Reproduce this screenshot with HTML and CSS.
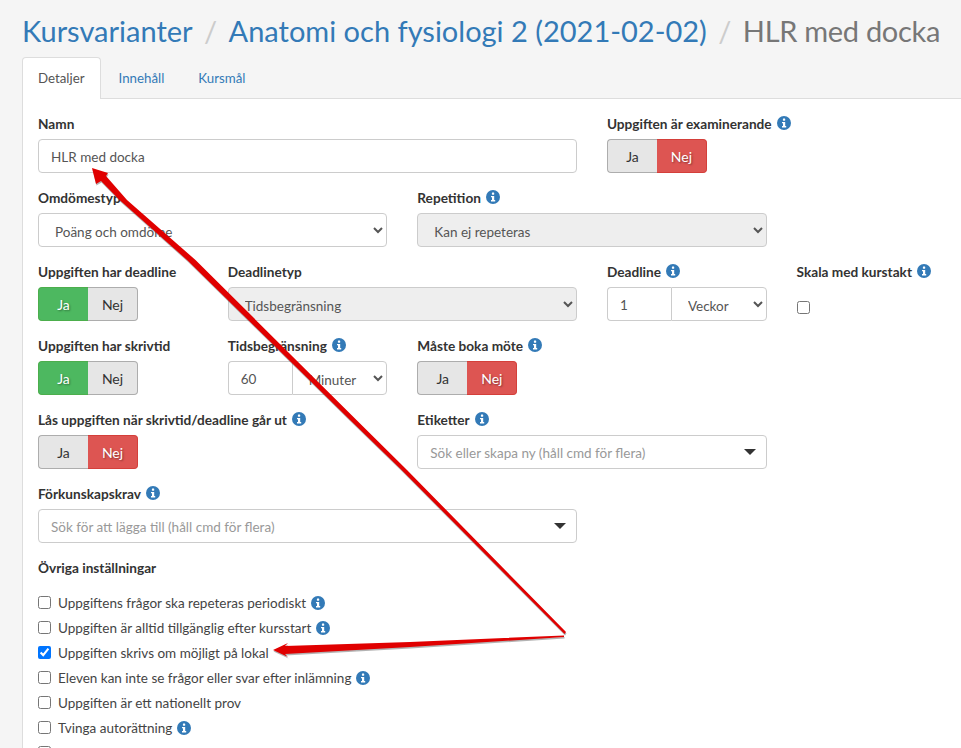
FILE: index.html
```html
<!DOCTYPE html>
<html lang="sv">
<head>
<meta charset="utf-8">
<title>HLR med docka</title>
<link rel="stylesheet" href="styles.css">
</head>
<body>
<svg width="0" height="0" class="defs">
  <symbol id="info" viewBox="0 0 14 14">
    <circle cx="7" cy="7" r="7" fill="#337ab7"/>
    <rect x="5.9" y="2.6" width="2.3" height="2.1" rx=".4" fill="#fff"/>
    <path d="M5 5.9h3.2v4.2h1v1.4H5v-1.4h1V7.3H5z" fill="#fff"/>
  </symbol>
</svg>
<main class="page">
  <h1 class="crumbs">
    <a class="crumb-link">Kursvarianter</a><span class="sep">/</span>
    <a class="crumb-link">Anatomi och fysiologi 2 (2021-02-02)</a><span class="sep">/</span>
    <span class="crumb-now">HLR med docka</span>
  </h1>
  <nav class="tabs">
    <a class="tab active">Detaljer</a>
    <a class="tab">Innehåll</a>
    <a class="tab">Kursmål</a>
  </nav>
  <form class="panel">
    <div class="grid">
      <div class="field s3">
        <label class="lbl">Namn</label>
        <input class="ctl" type="text" value="HLR med docka">
      </div>
      <div class="field">
        <label class="lbl">Uppgiften är examinerande <svg class="i"><use href="#info"/></svg></label>
        <div class="toggle"><span class="tg">Ja</span><span class="tg red">Nej</span></div>
      </div>

      <div class="field s2 newrow">
        <label class="lbl">Omdömestyp</label>
        <select class="ctl sel"><option>Poäng och omdöme</option></select>
      </div>
      <div class="field s2">
        <label class="lbl">Repetition <svg class="i"><use href="#info"/></svg></label>
        <select class="ctl sel" disabled><option>Kan ej repeteras</option></select>
      </div>

      <div class="field newrow">
        <label class="lbl">Uppgiften har deadline</label>
        <div class="toggle"><span class="tg green">Ja</span><span class="tg">Nej</span></div>
      </div>
      <div class="field s2">
        <label class="lbl">Deadlinetyp</label>
        <select class="ctl sel" disabled><option>Tidsbegränsning</option></select>
      </div>
      <div class="field">
        <label class="lbl">Deadline <svg class="i"><use href="#info"/></svg></label>
        <div class="group"><input class="num" type="text" value="1"><select class="unit"><option>Veckor</option></select></div>
      </div>
      <div class="field">
        <label class="lbl">Skala med kurstakt <svg class="i"><use href="#info"/></svg></label>
        <input class="scale" type="checkbox">
      </div>

      <div class="field newrow">
        <label class="lbl">Uppgiften har skrivtid</label>
        <div class="toggle"><span class="tg green">Ja</span><span class="tg">Nej</span></div>
      </div>
      <div class="field">
        <label class="lbl">Tidsbegränsning <svg class="i"><use href="#info"/></svg></label>
        <div class="group"><input class="num" type="text" value="60"><select class="unit"><option>Minuter</option></select></div>
      </div>
      <div class="field">
        <label class="lbl">Måste boka möte <svg class="i"><use href="#info"/></svg></label>
        <div class="toggle"><span class="tg">Ja</span><span class="tg red">Nej</span></div>
      </div>

      <div class="field s2 newrow">
        <label class="lbl">Lås uppgiften när skrivtid/deadline går ut <svg class="i"><use href="#info"/></svg></label>
        <div class="toggle"><span class="tg">Ja</span><span class="tg red">Nej</span></div>
      </div>
      <div class="field s2">
        <label class="lbl">Etiketter <svg class="i"><use href="#info"/></svg></label>
        <div class="ctl multi"><span>Sök eller skapa ny (håll cmd för flera)</span><i class="caret"></i></div>
      </div>

      <div class="field s3 newrow">
        <label class="lbl">Förkunskapskrav <svg class="i"><use href="#info"/></svg></label>
        <div class="ctl multi"><span>Sök för att lägga till (håll cmd för flera)</span><i class="caret"></i></div>
      </div>
    </div>

    <div class="lbl other">Övriga inställningar</div>
    <ul class="checks">
      <li><input type="checkbox"><span>Uppgiftens frågor ska repeteras periodiskt</span><svg class="i"><use href="#info"/></svg></li>
      <li><input type="checkbox"><span>Uppgiften är alltid tillgänglig efter kursstart</span><svg class="i"><use href="#info"/></svg></li>
      <li><input type="checkbox" checked><span>Uppgiften skrivs om möjligt på lokal</span></li>
      <li><input type="checkbox"><span>Eleven kan inte se frågor eller svar efter inlämning</span><svg class="i"><use href="#info"/></svg></li>
      <li><input type="checkbox"><span>Uppgiften är ett nationellt prov</span></li>
      <li><input type="checkbox"><span>Tvinga autorättning</span><svg class="i"><use href="#info"/></svg></li>
      <li><input type="checkbox"><span>Uppgiften kan inte rättas av lärare</span></li>
    </ul>
  </form>
</main>
<svg class="arrows" width="961" height="748" viewBox="0 0 961 748">
  <g fill="#444" opacity=".4" transform="translate(.5 1.5)">
    <polygon points="92,168 108,173 106,176 127,200 195.5,260 356.5,420 407,470 566,632 564.5,634 401.5,470 350,420 187,260 119.5,200 101,181 96,184"/>
    <polygon points="273,650 288,643 285,646 410,642 564,635.5 564,637 410,647 285,654 288,657"/>
  </g>
  <g fill="#e00000">
    <polygon points="92,168 108,173 106,176 127,200 195.5,260 356.5,420 407,470 566,632 564.5,634 401.5,470 350,420 187,260 119.5,200 101,181 96,184"/>
    <polygon points="273,650 288,643 285,646 410,642 564,635.5 564,637 410,647 285,654 288,657"/>
  </g>
</svg>
</body>
</html>
```
FILE: styles.css
```css
* { box-sizing: border-box; }
html, body { margin: 0; height: 748px; overflow: hidden; }
body {
  background: #f5f5f5;
  color: #333;
  font-family: "Lato", "Open Sans", sans-serif;
  font-size: 14px;
  position: relative;
}
.defs { position: absolute; }
.page { padding: 14px 0 0 22px; width: 1400px; }
.crumbs {
  display: flex;
  align-items: center;
  margin: 0 0 9px;
  height: 34px;
  font-size: 29px;
  font-weight: 400;
  line-height: 34px;
}
.crumb-link { color: #337ab7; }
.crumb-now { color: #777; letter-spacing: -.3px; }
.sep { color: #ccc; width: 36px; text-align: center; }
.tabs {
  display: flex;
  height: 42px;
  border-bottom: 1px solid #ddd;
}
.tab {
  padding: 0 15px;
  margin-right: 2px;
  height: 41px;
  line-height: 41px;
  color: #337ab7;
  font-size: 13.3px;
  border: 1px solid transparent;
  border-bottom: 0;
}
.tab.active {
  color: #555;
  background: #fff;
  border-color: #ddd;
  border-radius: 4px 4px 0 0;
  height: 42px;
}
.panel {
  background: #fff;
  border-left: 1px solid #ddd;
  padding: 15px 15px 0;
  height: 700px;
}
.grid {
  display: grid;
  grid-template-columns: repeat(6, 159.65px);
  column-gap: 30px;
  row-gap: 15px;
}
.field { grid-column: auto / span 1; min-width: 0; }
.s2 { grid-column: auto / span 2; }
.s3 { grid-column: auto / span 3; }
.newrow { grid-column-start: 1; }
.lbl {
  display: block;
  height: 20px;
  line-height: 20px;
  margin-bottom: 5px;
  font-weight: 700;
  font-size: 13.65px;
  white-space: nowrap;
  color: #333;
}
.i {
  width: 14px;
  height: 14px;
  margin-left: 2px;
  vertical-align: -1px;
}
.ctl {
  display: block;
  width: 100%;
  height: 34px;
  padding: 7px 12px 5px;
  font: inherit;
  font-size: 13.5px;
  color: #555;
  background-color: #fff;
  border: 1px solid #ccc;
  border-radius: 4px;
  outline: 0;
}
.sel { padding-top: 8px; padding-bottom: 4px; }
.sel[disabled] { background-color: #eee; opacity: 1; color: #555; }
.toggle { display: flex; width: 100px; height: 34px; }
.tg {
  flex: 1;
  display: flex;
  align-items: center;
  justify-content: center;
  font-size: 14px;
  color: #333;
  background: #e6e6e6;
  border: 1px solid #adadad;
}
.tg:first-child { border-radius: 4px 0 0 4px; border-right: 0; }
.tg:last-child { border-radius: 0 4px 4px 0; border-left: 0; }
.tg.red {
  background: #dd5552;
  border-color: #d43f3a;
  color: #fff;
  text-shadow: 1px 1px 2px rgba(0,0,0,.4);
}
.tg.green {
  background: #4db860;
  border-color: #4cae4c;
  color: #fff;
  text-shadow: 1px 1px 2px rgba(0,0,0,.4);
}
.group { display: flex; width: 100%; height: 34px; }
.num {
  width: 64px;
  padding: 7px 12px 5px;
  font: inherit;
  font-size: 13.5px;
  color: #555;
  border: 1px solid #ccc;
  border-right: 0;
  border-radius: 4px 0 0 4px;
  outline: 0;
}
.unit {
  flex: 1;
  min-width: 0;
  padding: 8px 12px 4px;
  font: inherit;
  font-size: 13.5px;
  color: #555;
  background: #fff;
  border: 1px solid #ccc;
  border-radius: 0 4px 4px 0;
  outline: 0;
}
.scale { display: block; margin: 19px 0 0; width: 13px; height: 13px; }
.multi {
  display: flex;
  align-items: center;
  justify-content: space-between;
  color: #999;
  font-size: 13.5px;
  padding-right: 10px;
}
.multi span { white-space: nowrap; }
.caret {
  width: 0;
  height: 0;
  margin-top: -2px;
  border-left: 6px solid transparent;
  border-right: 6px solid transparent;
  border-top: 6px solid #333;
}
.other { margin: 15px 0 0; }
.checks { list-style: none; margin: 0; padding: 12px 0 0; }
.checks li {
  display: flex;
  align-items: center;
  height: 25px;
  color: #444;
  font-size: 13.5px;
  white-space: nowrap;
}
.checks input { margin: 0 7px 0 0; width: 13px; height: 13px; }
.checks .i { margin-left: 5px; }
.arrows { position: absolute; left: 0; top: 0; pointer-events: none; }
```
